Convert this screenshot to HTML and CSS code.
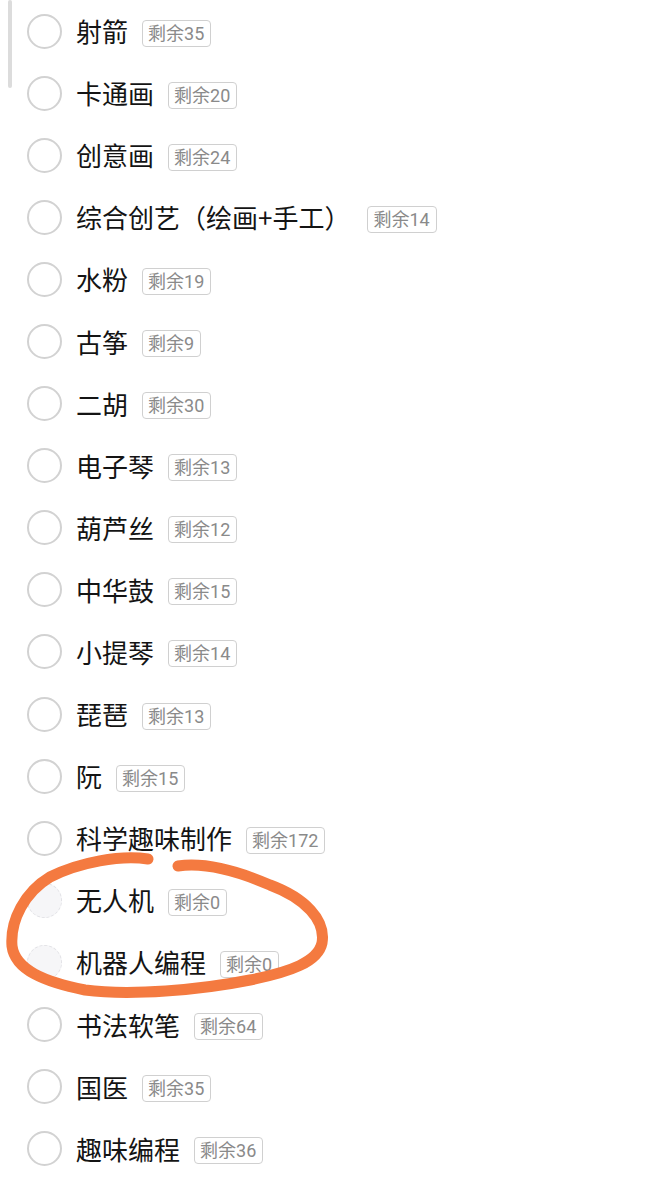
FILE: index.html
```html
<!DOCTYPE html>
<html lang="zh-CN">
<head>
<meta charset="utf-8">
<link rel="stylesheet" href="styles.css">
</head>
<body>
<div class="scrollbar"></div>
<ul class="list">
  <li class="row"><span class="radio"></span><span class="name">射箭</span><span class="badge">剩余35</span></li>
  <li class="row"><span class="radio"></span><span class="name">卡通画</span><span class="badge">剩余20</span></li>
  <li class="row"><span class="radio"></span><span class="name">创意画</span><span class="badge">剩余24</span></li>
  <li class="row"><span class="radio"></span><span class="name wide">综合创艺（绘画+手工）</span><span class="badge">剩余14</span></li>
  <li class="row"><span class="radio"></span><span class="name">水粉</span><span class="badge">剩余19</span></li>
  <li class="row"><span class="radio"></span><span class="name">古筝</span><span class="badge">剩余9</span></li>
  <li class="row"><span class="radio"></span><span class="name">二胡</span><span class="badge">剩余30</span></li>
  <li class="row"><span class="radio"></span><span class="name">电子琴</span><span class="badge">剩余13</span></li>
  <li class="row"><span class="radio"></span><span class="name">葫芦丝</span><span class="badge">剩余12</span></li>
  <li class="row"><span class="radio"></span><span class="name">中华鼓</span><span class="badge">剩余15</span></li>
  <li class="row"><span class="radio"></span><span class="name">小提琴</span><span class="badge">剩余14</span></li>
  <li class="row"><span class="radio"></span><span class="name">琵琶</span><span class="badge">剩余13</span></li>
  <li class="row"><span class="radio"></span><span class="name">阮</span><span class="badge">剩余15</span></li>
  <li class="row"><span class="radio"></span><span class="name">科学趣味制作</span><span class="badge">剩余172</span></li>
  <li class="row"><span class="radio disabled"></span><span class="name">无人机</span><span class="badge">剩余0</span></li>
  <li class="row"><span class="radio disabled"></span><span class="name">机器人编程</span><span class="badge">剩余0</span></li>
  <li class="row"><span class="radio"></span><span class="name">书法软笔</span><span class="badge">剩余64</span></li>
  <li class="row"><span class="radio"></span><span class="name">国医</span><span class="badge">剩余35</span></li>
  <li class="row"><span class="radio"></span><span class="name">趣味编程</span><span class="badge">剩余36</span></li>
</ul>
<svg class="annotation" width="663" height="1200" viewBox="0 0 663 1200">
  <path d="M148 859 C120 855, 80 862, 50 877 C25 892, 10 920, 12 946 C15 970, 45 982, 85 990 C130 996, 200 990, 250 980 C290 972, 318 962, 322 943 C326 920, 305 898, 270 885 C240 872, 205 862, 178 866" fill="none" stroke="#f47a40" stroke-width="11" stroke-linecap="round" stroke-linejoin="round"/>
</svg>
</body>
</html>
```
FILE: styles.css
```css
html, body {
  margin: 0;
  padding: 0;
  background: #ffffff;
}
body {
  font-family: "Noto Sans CJK SC", "Noto Sans", sans-serif;
  color: #141414;
  position: relative;
  width: 663px;
  height: 1200px;
  overflow: hidden;
}
.scrollbar {
  position: absolute;
  left: 8px;
  top: 0;
  width: 4px;
  height: 88px;
  background: #dcdcdc;
  border-radius: 2px;
}
.list {
  list-style: none;
  margin: 0;
  padding: 0 0 0 27px;
}
.row {
  height: 62.1px;
  display: flex;
  align-items: center;
}
.radio {
  box-sizing: border-box;
  width: 35px;
  height: 35px;
  border: 2px solid #d2d2d2;
  border-radius: 50%;
  flex: none;
  background: #fff;
}
.radio.disabled {
  border: 1.5px dashed #e2e2e6;
  background: #f6f6f8;
}
.name {
  margin-left: 14px;
  font-size: 26px;
  line-height: 34px;
  color: #141414;
}
.name.wide {
  margin-right: 3px;
}
.badge {
  margin-left: 14px;
  font-family: Roboto, "Noto Sans CJK SC", sans-serif;
  font-size: 18px;
  line-height: 25px;
  padding: 0 6px 0 5px;
  color: #8a8a8a;
  border: 1px solid #d0d0d0;
  border-radius: 4px;
  margin-top: 4px;
}
.annotation {
  position: absolute;
  left: 0;
  top: 0;
  pointer-events: none;
}
```
